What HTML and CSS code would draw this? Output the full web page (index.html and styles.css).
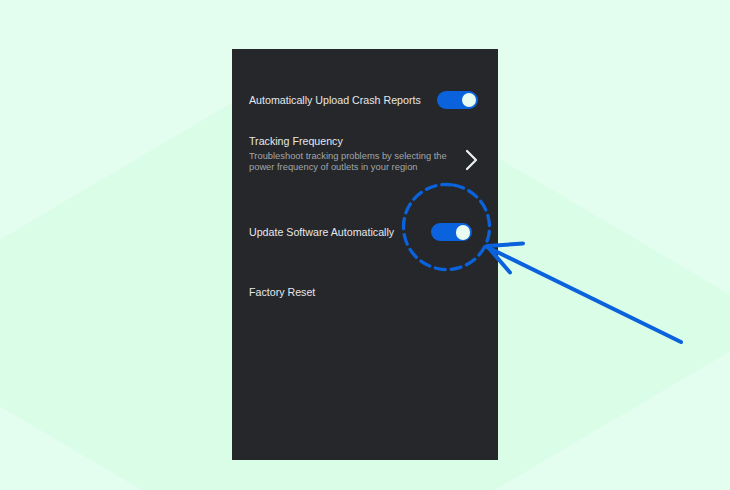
FILE: index.html
```html
<!DOCTYPE html>
<html>
<head>
<meta charset="utf-8">
<link rel="stylesheet" href="styles.css">
</head>
<body>
<div class="bg"></div>
<div class="panel">
  <div class="row row-toggle first">
    <span class="label">Automatically Upload Crash Reports</span>
    <span class="toggle"><span class="knob"></span></span>
  </div>
  <div class="row row-nav">
    <div class="nav-text">
      <div class="label title">Tracking Frequency</div>
      <div class="sub">Troubleshoot tracking problems by selecting the power frequency of outlets in your region</div>
    </div>
    <svg class="chevron" width="13" height="22" viewBox="0 0 13 22">
      <path d="M2 2 L11 11 L2 20" fill="none" stroke="#eef3f0" stroke-width="2.2" stroke-linecap="round" stroke-linejoin="round"/>
    </svg>
  </div>
  <div class="row row-toggle second">
    <span class="label">Update Software Automatically</span>
    <span class="toggle shifted"><span class="knob"></span></span>
  </div>
  <div class="row reset">
    <span class="label">Factory Reset</span>
  </div>
</div>
<svg class="annot" width="730" height="490" viewBox="0 0 730 490">
  <ellipse cx="446.5" cy="227" rx="42.5" ry="43" fill="none" stroke="#0a63dc" stroke-width="3.3" stroke-dasharray="10 6" stroke-linecap="round" transform="rotate(-80 446.5 227)"/>
  <g fill="none" stroke="#0a63dc" stroke-width="4" stroke-linecap="round" stroke-linejoin="round">
    <path d="M681 342 L487 247"/>
    <path d="M523 243.5 L487 246 L510 272.5"/>
  </g>
</svg>
</body>
</html>
```
FILE: styles.css
```css
html, body {
  margin: 0;
  padding: 0;
}
body {
  width: 730px;
  height: 490px;
  overflow: hidden;
  background: #e3fdee;
  font-family: "Liberation Sans", Arial, sans-serif;
  position: relative;
  padding: 49px 0 0 232px;
  box-sizing: border-box;
}
.bg {
  position: absolute;
  left: 0;
  top: 0;
  width: 730px;
  height: 490px;
  background: #dafde7;
  clip-path: polygon(-141px 323px, 318px 52px, 778px 323px, 318px 594px);
  z-index: 0;
}
.panel {
  position: relative;
  z-index: 1;
  width: 266px;
  height: 411px;
  background: #25272a;
  box-sizing: border-box;
  padding: 42px 20px 0 17px;
  display: flex;
  flex-direction: column;
}
.row {
  display: flex;
  align-items: center;
}
.label {
  color: #e6e8ea;
  font-size: 10.67px;
  line-height: 14px;
  white-space: nowrap;
}
.row-toggle {
  height: 18px;
  justify-content: space-between;
}
.toggle {
  width: 41px;
  height: 18px;
  border-radius: 9px;
  background: #0a63dc;
  position: relative;
  display: flex;
  align-items: center;
  justify-content: flex-end;
  padding-right: 2px;
  box-sizing: border-box;
}
.toggle.shifted {
  margin-right: 6px;
}
.knob {
  width: 14.5px;
  height: 14.5px;
  border-radius: 50%;
  background: #e9fcf0;
}
.row-nav {
  margin-top: 25px;
  align-items: flex-start;
  justify-content: space-between;
}
.nav-text {
  width: 208px;
}
.title {
  margin-bottom: 3px;
}
.sub {
  color: #a3a6a9;
  font-size: 9.33px;
  line-height: 10.67px;
}
.chevron {
  margin-top: 15px;
  display: block;
}
.second {
  margin-top: 51px;
}
.reset {
  margin-top: 44px;
}
.annot {
  position: absolute;
  left: 0;
  top: 0;
  z-index: 2;
  pointer-events: none;
}
```
